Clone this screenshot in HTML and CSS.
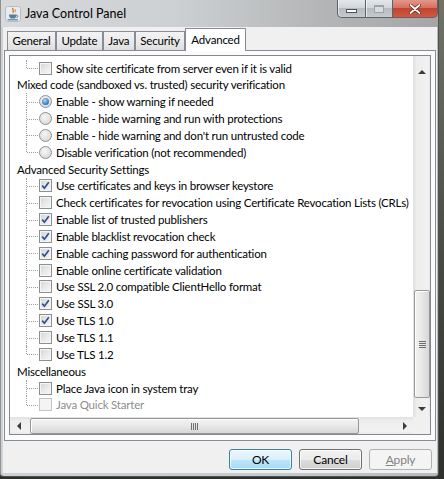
FILE: index.html
```html
<!DOCTYPE html>
<html>
<head>
<meta charset="utf-8">
<title>Java Control Panel</title>
<link rel="stylesheet" href="styles.css">
</head>
<body>
<div class="window">
  <div class="titlebar">
    <svg class="app-icon" width="16" height="16" viewBox="0 0 16 16">
      <rect x="0.5" y="0.5" width="15" height="15" rx="2" fill="#e9ebee" stroke="#b9bcc0"/>
      <path d="M8.2 2c-2 1.6 1.6 2.4-.4 4.8" fill="none" stroke="#e76f00" stroke-width="1.3"/>
      <path d="M10.4 3.2c-1.4 1 .8 1.5-.5 3" fill="none" stroke="#e76f00" stroke-width="1"/>
      <path d="M4 8.5h7.5s.2 2.8-1.8 4h-3.9c-2-1.2-1.8-4-1.8-4z" fill="#5382a1"/>
      <path d="M11.4 9.2c1.9 0 1.9 2.2 0 2.4" fill="none" stroke="#5382a1" stroke-width="1"/>
      <path d="M2.5 13.8h10.5" stroke="#5382a1" stroke-width="1.2"/>
    </svg>
    <span class="title">Java Control Panel</span>
    <div class="controls">
      <div class="ctl ctl-min"><span class="min-glyph"></span></div>
      <div class="ctl ctl-max"><span class="max-glyph"></span></div>
      <div class="ctl ctl-close">
        <svg width="12" height="10" viewBox="0 0 12 10">
          <path d="M1.5 1l9 8M10.5 1l-9 8" stroke="#5a1d16" stroke-width="3.2" stroke-linecap="round"/>
          <path d="M1.5 1l9 8M10.5 1l-9 8" stroke="#ffffff" stroke-width="1.8" stroke-linecap="round"/>
        </svg>
      </div>
    </div>
  </div>

  <div class="client">
    <div class="tabs">
      <div class="tab">General</div>
      <div class="tab">Update</div>
      <div class="tab">Java</div>
      <div class="tab">Security</div>
      <div class="tab active">Advanced</div>
    </div>

    <div class="panel">
      <div class="scrollpane">
        <div class="list">
          <div class="row child last"><span class="cb"></span><span class="label">Show site certificate from server even if it is valid</span></div>
          <div class="row heading"><span class="label">Mixed code (sandboxed vs. trusted) security verification</span></div>
          <div class="row child"><span class="rb on"></span><span class="label">Enable - show warning if needed</span></div>
          <div class="row child"><span class="rb"></span><span class="label">Enable - hide warning and run with protections</span></div>
          <div class="row child"><span class="rb"></span><span class="label">Enable - hide warning and don't run untrusted code</span></div>
          <div class="row child last"><span class="rb"></span><span class="label">Disable verification (not recommended)</span></div>
          <div class="row heading"><span class="label">Advanced Security Settings</span></div>
          <div class="row child"><span class="cb on"><svg viewBox="0 0 11 11"><path d="M2.2 5.6l2.2 2.6 4.4-6" fill="none" stroke="#2f4f8f" stroke-width="1.7"/></svg></span><span class="label">Use certificates and keys in browser keystore</span></div>
          <div class="row child"><span class="cb"></span><span class="label">Check certificates for revocation using Certificate Revocation Lists (CRLs)</span></div>
          <div class="row child"><span class="cb on"><svg viewBox="0 0 11 11"><path d="M2.2 5.6l2.2 2.6 4.4-6" fill="none" stroke="#2f4f8f" stroke-width="1.7"/></svg></span><span class="label">Enable list of trusted publishers</span></div>
          <div class="row child"><span class="cb on"><svg viewBox="0 0 11 11"><path d="M2.2 5.6l2.2 2.6 4.4-6" fill="none" stroke="#2f4f8f" stroke-width="1.7"/></svg></span><span class="label">Enable blacklist revocation check</span></div>
          <div class="row child"><span class="cb on"><svg viewBox="0 0 11 11"><path d="M2.2 5.6l2.2 2.6 4.4-6" fill="none" stroke="#2f4f8f" stroke-width="1.7"/></svg></span><span class="label">Enable caching password for authentication</span></div>
          <div class="row child"><span class="cb"></span><span class="label">Enable online certificate validation</span></div>
          <div class="row child"><span class="cb"></span><span class="label">Use SSL 2.0 compatible ClientHello format</span></div>
          <div class="row child"><span class="cb on"><svg viewBox="0 0 11 11"><path d="M2.2 5.6l2.2 2.6 4.4-6" fill="none" stroke="#2f4f8f" stroke-width="1.7"/></svg></span><span class="label">Use SSL 3.0</span></div>
          <div class="row child"><span class="cb on"><svg viewBox="0 0 11 11"><path d="M2.2 5.6l2.2 2.6 4.4-6" fill="none" stroke="#2f4f8f" stroke-width="1.7"/></svg></span><span class="label">Use TLS 1.0</span></div>
          <div class="row child"><span class="cb"></span><span class="label">Use TLS 1.1</span></div>
          <div class="row child last"><span class="cb"></span><span class="label">Use TLS 1.2</span></div>
          <div class="row heading"><span class="label">Miscellaneous</span></div>
          <div class="row child"><span class="cb"></span><span class="label">Place Java icon in system tray</span></div>
          <div class="row child last disabled"><span class="cb"></span><span class="label">Java Quick Starter</span></div>
        </div>

        <div class="vscroll">
          <div class="sbtn"><span class="arrow up"></span></div>
          <div class="vtrack">
            <div class="vthumb"><span class="grip-v"></span></div>
          </div>
          <div class="sbtn"><span class="arrow down"></span></div>
        </div>

        <div class="hscroll">
          <div class="sbtn"><span class="arrow left"></span></div>
          <div class="htrack">
            <div class="hthumb"><span class="grip-h"></span></div>
          </div>
          <div class="sbtn"><span class="arrow right"></span></div>
        </div>

        <div class="corner"></div>
      </div>
    </div>

    <div class="buttons">
      <div class="btn default">OK</div>
      <div class="btn">Cancel</div>
      <div class="btn disabled"><u>A</u>pply</div>
    </div>
  </div>
</div>
</body>
</html>
```

FILE: styles.css
```css
* { box-sizing: border-box; }
html, body { margin: 0; padding: 0; }
body {
  width: 444px;
  height: 479px;
  overflow: hidden;
  background: linear-gradient(180deg, #707466 0%, #474a40 55%, #2e302b 100%);
  font-family: Lato, "Noto Sans", sans-serif;
  font-size: 11.5px;
  letter-spacing: -0.2px;
  color: #000;
}

.window {
  width: 439px;
  height: 477px;
  display: flex;
  flex-direction: column;
  background: linear-gradient(90deg, #cfd2d5 0%, #c8cbce 60%, #b7babd 100%);
  border-left: 1px solid #8f9295;
  border-right: 1px solid #505356;
  border-bottom: 1px solid #505356;
  border-radius: 0 0 4px 4px;
}

/* title bar */
.titlebar {
  height: 27px;
  flex: none;
  display: flex;
  align-items: center;
  background: linear-gradient(90deg, #d7d9db 0%, #cdd0d2 40%, #b2b4b6 75%, #a3a5a7 100%);
}
.app-icon { margin-left: 4px; flex: none; }
.title { margin-left: 4px; font-size: 12.5px; letter-spacing: 0; color: #000; }
.controls {
  margin-left: auto;
  align-self: flex-start;
  display: flex;
  height: 18px;
}
.ctl {
  height: 18px;
  display: flex;
  align-items: center;
  justify-content: center;
  border: 1px solid #5f6366;
  border-top: none;
}
.ctl-min {
  width: 28px;
  border-radius: 0 0 0 5px;
  border-right: none;
  background: linear-gradient(180deg, #e4e7ea 0%, #d2d6da 45%, #b7bcc1 50%, #c5cacf 100%);
  box-shadow: inset 1px 0 0 rgba(255,255,255,.6);
}
.ctl-max {
  width: 27px;
  border-right: none;
  background: linear-gradient(180deg, #e4e7ea 0%, #d2d6da 45%, #b7bcc1 50%, #c5cacf 100%);
  box-shadow: inset 1px 0 0 rgba(255,255,255,.6);
}
.ctl-close {
  width: 46px;
  border-radius: 0 0 5px 0;
  background: linear-gradient(180deg, #e5978a 0%, #d6705f 45%, #c2432f 50%, #cf5a44 100%);
}
.min-glyph {
  width: 11px;
  height: 4px;
  margin-top: 5px;
  background: #fff;
  border: 1px solid #4d5156;
}
.max-glyph {
  width: 10px;
  height: 8px;
  border: 1px solid #9ea3a8;
  border-top-width: 2px;
  background: #d8dcdf;
}

/* client area */
.client {
  height: 446px;
  margin: 0 1px 0 2px;
  background: #f0f0f0;
  display: flex;
  flex-direction: column;
}

.tabs {
  height: 23px;
  flex: none;
  display: flex;
  align-items: flex-end;
  padding-left: 4px;
}
.tab {
  height: 19px;
  padding: 0 4.5px;
  line-height: 17px;
  border: 1px solid #898c95;
  border-bottom: none;
  background: linear-gradient(180deg, #f3f3f3 0%, #ebebeb 50%, #dedede 100%);
  white-space: nowrap;
}
.tab.active {
  height: 23px;
  margin-bottom: -1px;
  padding: 0 5px 0 5px;
  line-height: 21px;
  background: #fff;
  position: relative;
  z-index: 1;
}

.panel {
  height: 391px;
  flex: none;
  margin: 0 1px 0 1px;
  border: 1px solid #898c95;
  background: #fbfbfb;
  padding: 4px 4px 5px 4px;
}

.scrollpane {
  height: 100%;
  border: 1px solid #828790;
  background: #fff;
  display: grid;
  grid-template-columns: 1fr 17px;
  grid-template-rows: 1fr 17px;
  overflow: hidden;
}

/* tree list */
.list {
  padding-top: 3.6px;
  overflow: hidden;
  white-space: nowrap;
}
.row {
  height: 16.85px;
  display: flex;
  align-items: center;
  position: relative;
}
.heading { padding-left: 7px; }
.child { padding-left: 29px; }
.child::before {
  content: "";
  position: absolute;
  left: 16px;
  top: 0;
  bottom: 0;
  border-left: 1px dotted #9c9c9c;
}
.child.last::before { bottom: 50%; }
.child::after {
  content: "";
  position: absolute;
  left: 17px;
  width: 11px;
  top: 50%;
  border-top: 1px dotted #9c9c9c;
}
.child .label { margin-left: 4px; }

.cb {
  width: 13px;
  height: 13px;
  flex: none;
  border: 1px solid #8e8f8f;
  background: linear-gradient(135deg, #d2d4d6 0%, #e9eaeb 55%, #f7f7f7 100%);
  box-shadow: inset 0 0 0 1px #f5f5f5;
  display: flex;
  align-items: center;
  justify-content: center;
}
.cb svg { width: 11px; height: 11px; }
.rb {
  width: 13px;
  height: 13px;
  flex: none;
  border-radius: 50%;
  border: 1px solid #8e8f8f;
  background: radial-gradient(circle at 40% 35%, #f7f7f7 0%, #e0e0e0 60%, #cfcfcf 100%);
  display: flex;
  align-items: center;
  justify-content: center;
}
.rb.on::after {
  content: "";
  width: 7px;
  height: 7px;
  border-radius: 50%;
  background: radial-gradient(circle at 40% 35%, #a9dcfa 0%, #3d8ad0 55%, #1b4f95 100%);
}
.disabled .label { color: #8d8d8d; }
.disabled .cb {
  border-color: #c4c4c4;
  background: #f4f4f4;
  box-shadow: none;
}

/* scrollbars */
.vscroll {
  display: flex;
  flex-direction: column;
  background: linear-gradient(90deg, #e2e2e2 0%, #ededed 15%, #f1f1f1 85%, #e8e8e8 100%);
  border-left: 1px solid #e3e3e3;
}
.hscroll {
  display: flex;
  background: linear-gradient(180deg, #e2e2e2 0%, #ededed 15%, #f1f1f1 85%, #e8e8e8 100%);
  border-top: 1px solid #e3e3e3;
}
.corner { background: #f0f0f0; }
.sbtn {
  width: 17px;
  height: 17px;
  flex: none;
  display: flex;
  align-items: center;
  justify-content: center;
}
.vscroll .sbtn { width: 16px; }
.hscroll .sbtn { height: 16px; }
.vscroll .sbtn:first-child { height: 32px; align-items: flex-end; }
.vscroll .sbtn:first-child .arrow { margin-bottom: 14px; }
.arrow { width: 0; height: 0; }
.arrow.up { border-left: 4px solid transparent; border-right: 4px solid transparent; border-bottom: 4px solid #3a3a3a; }
.arrow.down { border-left: 4px solid transparent; border-right: 4px solid transparent; border-top: 4px solid #3a3a3a; }
.arrow.left { border-top: 4px solid transparent; border-bottom: 4px solid transparent; border-right: 4px solid #3a3a3a; }
.arrow.right { border-top: 4px solid transparent; border-bottom: 4px solid transparent; border-left: 4px solid #3a3a3a; }

.vtrack { flex: 1; position: relative; }
.vthumb {
  margin: 202px 0 0 0;
  height: 108px;
  border: 1px solid #979797;
  border-radius: 2px;
  background: linear-gradient(90deg, #f3f3f3 0%, #e8e8e8 50%, #d6d6d6 100%);
  box-shadow: inset 1px 1px 0 #fff;
  display: flex;
  align-items: center;
  justify-content: center;
}
.grip-v {
  width: 7px;
  height: 7px;
  background: repeating-linear-gradient(180deg, #6e6e6e 0 1px, transparent 1px 2px);
}
.htrack { flex: 1; display: flex; align-items: stretch; }
.hthumb {
  margin-left: 3px;
  width: 329px;
  border: 1px solid #979797;
  border-radius: 2px;
  background: linear-gradient(180deg, #f3f3f3 0%, #e8e8e8 50%, #d6d6d6 100%);
  box-shadow: inset 1px 1px 0 #fff;
  display: flex;
  align-items: center;
  justify-content: center;
}
.grip-h {
  width: 7px;
  height: 7px;
  background: repeating-linear-gradient(90deg, #6e6e6e 0 1px, transparent 1px 2px);
}

/* buttons */
.buttons {
  flex: 1;
  display: flex;
  justify-content: flex-end;
  align-items: flex-start;
  gap: 7px;
  padding: 8px 5px 0 0;
}
.btn {
  width: 63px;
  height: 21px;
  border: 1px solid #707070;
  border-radius: 3px;
  text-align: center;
  line-height: 19px;
  font-size: 12px;
  background: linear-gradient(180deg, #f2f2f2 0%, #ebebeb 50%, #dddddd 51%, #cfcfcf 100%);
  box-shadow: inset 0 0 0 1px rgba(255,255,255,.75);
}
.btn.default {
  border-color: #3c7fb1;
  background: linear-gradient(180deg, #eaf6fd 0%, #d9f0fc 50%, #bee6fd 51%, #a7d9f5 100%);
}
.btn.disabled {
  border-color: #adb2b5;
  background: #f4f4f4;
  color: #838383;
  box-shadow: none;
}
```
